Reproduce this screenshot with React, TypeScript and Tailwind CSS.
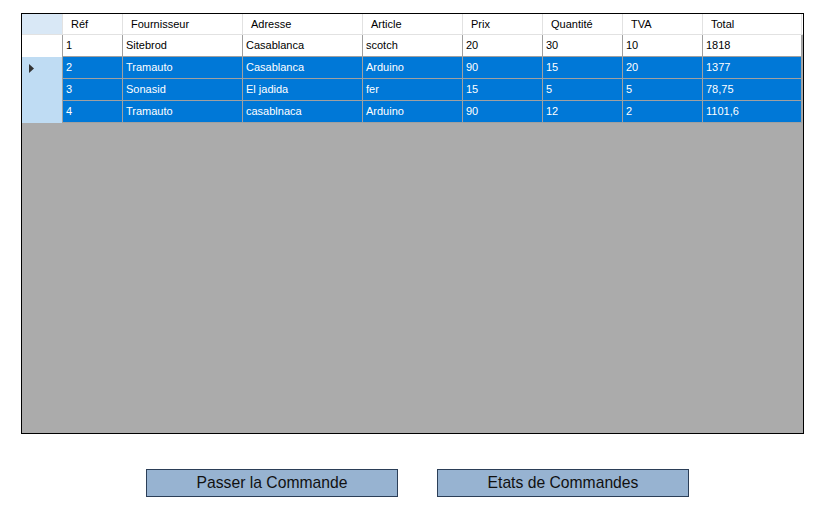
import React from "react";

const cols = [
  { name: "Réf", w: "w-[60px]" },
  { name: "Fournisseur", w: "w-[120px]" },
  { name: "Adresse", w: "w-[120px]" },
  { name: "Article", w: "w-[100px]" },
  { name: "Prix", w: "w-[80px]" },
  { name: "Quantité", w: "w-[80px]" },
  { name: "TVA", w: "w-[80px]" },
  { name: "Total", w: "w-[99px]" },
];

const rows = [
  { sel: false, cells: ["1", "Sitebrod", "Casablanca", "scotch", "20", "30", "10", "1818"] },
  { sel: true, cells: ["2", "Tramauto", "Casablanca", "Arduino", "90", "15", "20", "1377"] },
  { sel: true, cells: ["3", "Sonasid", "El jadida", "fer", "15", "5", "5", "78,75"] },
  { sel: true, cells: ["4", "Tramauto", "casablnaca", "Arduino", "90", "12", "2", "1101,6"] },
];

export default function App() {
  return (
    <div className="w-[819px] h-[512px] bg-white font-['Liberation_Sans',Arial,sans-serif] text-[11px] text-black">
      <div className="pt-[13px] pl-[21px]">
        {/* grid */}
        <div className="w-[783px] h-[421px] border border-black bg-[#ababab] flex flex-col">
          {/* header */}
          <div className="flex h-[21px] bg-white border-b border-[#e2e2e2]">
            <div className="w-[41px] bg-[#d9e8f6] border-r border-[#e2e2e2]" />
            {cols.map((c) => (
              <div key={c.name} className={`${c.w} border-r border-[#e2e2e2] pl-[8px] flex items-center`}>
                {c.name}
              </div>
            ))}
          </div>
          {rows.map((r, i) => (
            <div key={i} className="flex h-[22px]">
              <div
                className={`w-[41px] border-r border-[#a0a0a0] flex items-center pl-[7px] ${
                  r.sel ? "bg-[#bfdcf3]" : "bg-white"
                }`}
              >
                {i === 1 && (
                  <svg width="5" height="9" viewBox="0 0 5 9">
                    <path d="M0 0 L5 4.5 L0 9 Z" fill="#333" />
                  </svg>
                )}
              </div>
              {r.cells.map((v, j) => (
                <div
                  key={j}
                  className={`${cols[j].w} border-r border-b border-[#a0a0a0] pl-[3px] flex items-center ${
                    r.sel ? "bg-[#0078d7] text-white" : "bg-white text-black"
                  }`}
                >
                  {v}
                </div>
              ))}
            </div>
          ))}
        </div>
      </div>
      {/* buttons */}
      <div className="flex gap-[39px] pl-[146px] pt-[35px]">
        <button className="w-[252px] h-[28px] border border-[#2b3e57] bg-[#97b3d1] text-[15.7px] text-[#111] flex items-center justify-center">
          Passer la Commande
        </button>
        <button className="w-[252px] h-[28px] border border-[#2b3e57] bg-[#97b3d1] text-[15.7px] text-[#111] flex items-center justify-center">
          Etats de Commandes
        </button>
      </div>
    </div>
  );
}
